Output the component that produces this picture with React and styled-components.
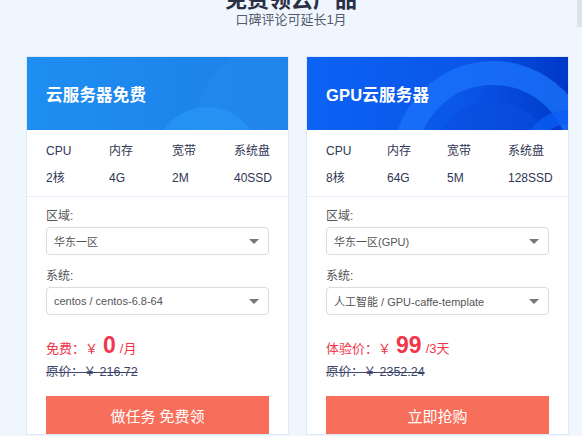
import React from 'react'
import styled, { createGlobalStyle } from 'styled-components'

const GlobalStyle = createGlobalStyle`
  html, body {
    margin: 0;
    padding: 0;
    background: #f0f6fe;
    font-family: "Liberation Sans", "Noto Sans CJK SC", sans-serif;
    overflow: hidden;
  }
`

const Page = styled.div`
  width: 582px;
  height: 436px;
  overflow: hidden;
  position: relative;
`

const ScrollThumb = styled.div`
  position: absolute;
  right: 0;
  top: 0;
  width: 5px;
  height: 27px;
  background: #dde2ec;
`

const Heading = styled.div`
  text-align: center;
  margin-top: -13px;
`

const Title = styled.h2`
  margin: 0;
  font-size: 22px;
  line-height: 26px;
  font-weight: 700;
  color: #2a2f45;
`

const Subtitle = styled.div`
  font-size: 13px;
  line-height: 16px;
  color: #555b6e;
  margin-top: -1px;
`

const Cards = styled.div`
  display: flex;
  gap: 19px;
  padding-left: 27px;
  margin-top: 29px;
`

const Card = styled.div`
  width: 261px;
  background: #fff;
  box-shadow: 0 0 0 1px #dfe8f6;
`

const Header = styled.div`
  position: relative;
  height: 73px;
  overflow: hidden;
  background: ${p => p.$bg};
  display: flex;
  align-items: center;
  padding-left: 19px;
`

const Decor = styled.svg`
  position: absolute;
  left: 0;
  top: 0;
`

const HeaderTitle = styled.div`
  position: relative;
  color: #fff;
  font-size: 16.5px;
  font-weight: 700;
  letter-spacing: 0.2px;
`

const Specs = styled.div`
  padding: 13px 19px 10px;
  display: grid;
  grid-template-columns: ${p => p.$cols};
  row-gap: 11px;
  border-bottom: 1px solid #e6edf8;
`

const SpecCell = styled.div`
  font-size: 12px;
  line-height: 16px;
  color: #2f3553;
`

const Body = styled.div`
  padding: 12px 19px 0;
`

const FieldLabel = styled.div`
  font-size: 12px;
  line-height: 14px;
  color: #555;
  margin-top: ${p => p.$top || 0}px;
  margin-bottom: 4px;
`

const Select = styled.div`
  height: 28px;
  box-sizing: border-box;
  border: 1px solid #dcdcdc;
  border-radius: 4px;
  display: flex;
  align-items: center;
  justify-content: space-between;
  padding: 0 9px 0 7px;
  font-size: 11px;
  color: #555;
`

const Caret = styled.span`
  width: 0;
  height: 0;
  border-left: 5px solid transparent;
  border-right: 5px solid transparent;
  border-top: 5px solid #777;
`

const PriceRow = styled.div`
  margin-top: 17px;
  height: 27px;
  display: flex;
  align-items: baseline;
  color: #f0364a;
  font-size: 13px;
`

const Big = styled.span`
  font-size: 23px;
  font-weight: 700;
  margin: 0 4px 0 5px;
`

const Original = styled.div`
  margin-top: 6px;
  font-size: 12.5px;
  line-height: 14px;
  color: #3c4468;
  text-decoration: line-through;
`

const Button = styled.button`
  margin-top: 17px;
  width: 100%;
  height: 38px;
  border: 0;
  background: #f76f5b;
  color: #fff;
  font-size: 15px;
  font-family: inherit;
  cursor: pointer;
`

const products = [
  {
    title: '云服务器免费',
    bg: 'linear-gradient(90deg, #1e8ef2 0%, #1c80e8 100%)',
    cols: '63px 63px 62px 1fr',
    specs: ['2核', '4G', '2M', '40SSD'],
    region: '华东一区',
    system: 'centos / centos-6.8-64',
    priceLabel: '免费：',
    price: '0',
    unit: '/月',
    original: '原价：￥ 216.72',
    action: '做任务 免费领',
    decor: 'cloud',
  },
  {
    title: 'GPU云服务器',
    bg: 'linear-gradient(90deg, #0c63f4 0%, #0a56e8 60%, #0038c8 100%)',
    cols: '61px 60px 61px 1fr',
    specs: ['8核', '64G', '5M', '128SSD'],
    region: '华东一区(GPU)',
    system: '人工智能 / GPU-caffe-template',
    priceLabel: '体验价：',
    price: '99',
    unit: '/3天',
    original: '原价：￥ 2352.24',
    action: '立即抢购',
    decor: 'gpu',
  },
]

function HeaderDecor({ kind }) {
  if (kind === 'cloud') {
    return (
      <Decor width="261" height="73" viewBox="0 0 261 73">
        <circle cx="262" cy="78" r="96" fill="#2a93f2" opacity="0.3" />
        <circle cx="180" cy="102" r="52" fill="#2796f5" opacity="0.75" />
      </Decor>
    )
  }
  return (
    <Decor width="261" height="73" viewBox="0 0 261 73">
      <circle cx="186" cy="104" r="88" fill="none" stroke="#1a72fa" strokeWidth="24" opacity="0.8" />
      <circle cx="186" cy="104" r="60" fill="#0a4fe0" opacity="0.6" />
      <circle cx="262" cy="100" r="40" fill="none" stroke="#0b5cf2" strokeWidth="14" opacity="0.8" />
    </Decor>
  )
}

function ProductCard({ p }) {
  return (
    <Card>
      <Header $bg={p.bg}>
        <HeaderDecor kind={p.decor} />
        <HeaderTitle>{p.title}</HeaderTitle>
      </Header>
      <Specs $cols={p.cols}>
        {['CPU', '内存', '宽带', '系统盘'].map(s => <SpecCell key={s}>{s}</SpecCell>)}
        {p.specs.map(s => <SpecCell key={s}>{s}</SpecCell>)}
      </Specs>
      <Body>
        <FieldLabel>区域:</FieldLabel>
        <Select>{p.region}<Caret /></Select>
        <FieldLabel $top={14}>系统:</FieldLabel>
        <Select>{p.system}<Caret /></Select>
        <PriceRow>
          {p.priceLabel}￥<Big>{p.price}</Big>{p.unit}
        </PriceRow>
        <Original>{p.original}</Original>
        <Button>{p.action}</Button>
      </Body>
    </Card>
  )
}

export default function App() {
  return (
    <Page>
      <GlobalStyle />
      <ScrollThumb />
      <Heading>
        <Title>免费领云产品</Title>
        <Subtitle>口碑评论可延长1月</Subtitle>
      </Heading>
      <Cards>
        {products.map(p => <ProductCard key={p.title} p={p} />)}
      </Cards>
    </Page>
  )
}
